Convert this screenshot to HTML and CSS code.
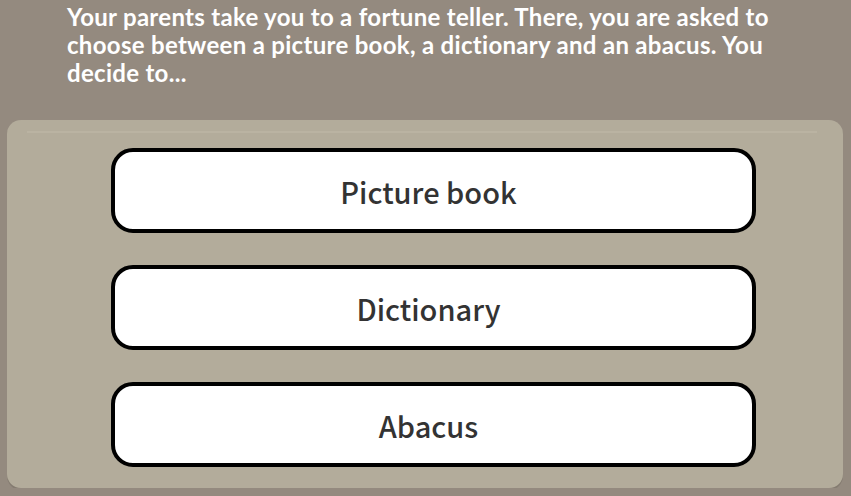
FILE: index.html
```html
<!DOCTYPE html>
<html lang="en">
<head>
    <meta charset="UTF-8">
    <meta name="viewport" content="width=device-width, initial-scale=1.0">
    <title>Fortune Teller</title>
    <link rel="stylesheet" href="styles.css">
</head>
<body>

<!-- Story text -->
<div class="question">
    Your parents take you to a fortune teller. There, you are asked to
    choose between a picture book, a dictionary and an abacus. You
    decide to...
</div>

<!-- Answer panel -->
<div class="panel">
    <button class="choice">Picture book</button>
    <button class="choice">Dictionary</button>
    <button class="choice">Abacus</button>
</div>

</body>
</html>
```

FILE: styles.css
```css
body {
    margin: 0;
    padding: 0;
    background-color: #948a7f;
    font-family: Lato, "DejaVu Sans", sans-serif;
    overflow: hidden;
}

.question {
    color: #ffffff;
    font-size: 24px;
    font-weight: bold;
    line-height: 28px;
    letter-spacing: 0.3px;
    padding: 3px 0 0 67px;
    width: 790px;
    height: 120px;
    box-sizing: border-box;
}

.panel {
    margin: 0 8px 0 7px;
    height: 368px;
    box-sizing: border-box;
    padding-top: 28px;
    background-color: #b3ac9b;
    /* faint highlight line near the top edge */
    background-image: linear-gradient(to bottom, transparent 11px, #bab3a2 11px, #bab3a2 13px, transparent 13px);
    background-size: 790px 14px;
    background-position: 20px 0;
    background-repeat: no-repeat;
    border-radius: 14px;
    box-shadow: 0 2px 0 #857c71;
    display: flex;
    flex-direction: column;
    gap: 32px;
}

.choice {
    margin-left: 104px;
    width: 645px;
    height: 85px;
    background-color: #ffffff;
    border: 4px solid #000000;
    border-radius: 22px;
    font-family: "Noto Sans CJK SC", "Noto Sans", sans-serif;
    font-size: 29px;
    font-weight: 500;
    color: #333333;
    cursor: pointer;
    padding: 0 10px 0 0;
}
```
